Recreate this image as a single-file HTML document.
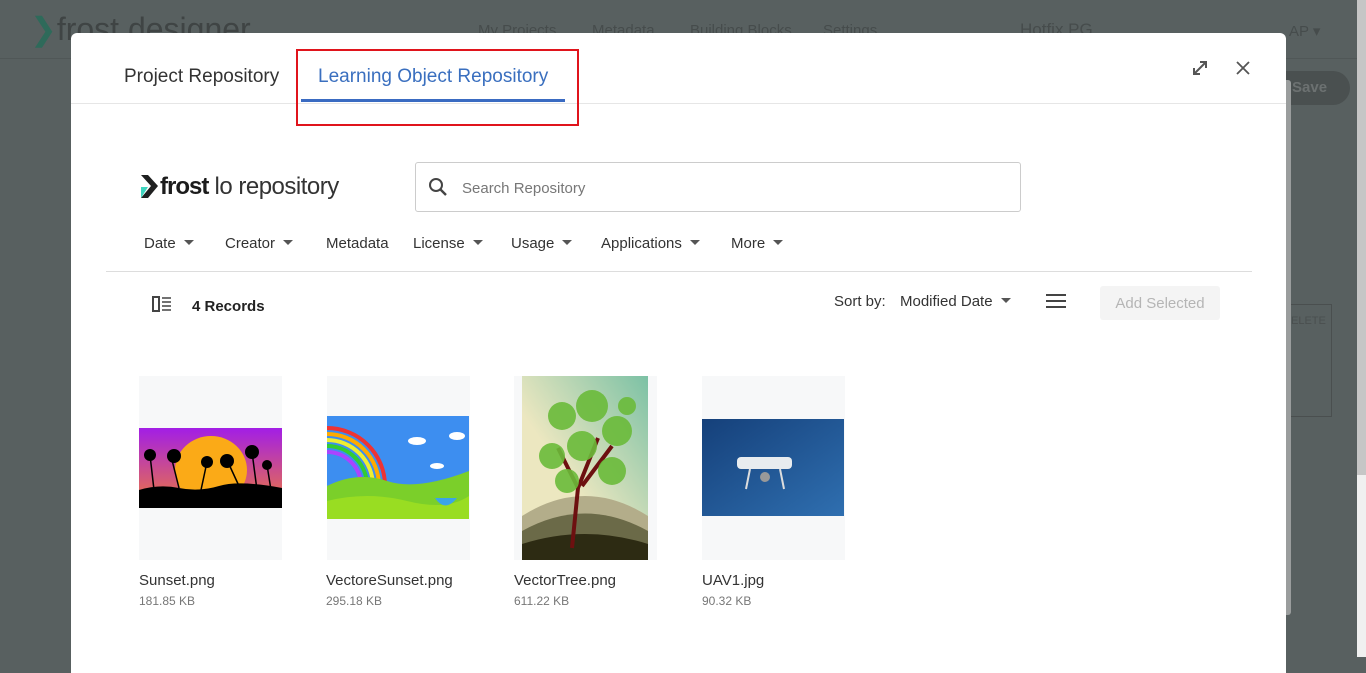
<!DOCTYPE html>
<html><head><meta charset="utf-8"><style>
*{box-sizing:border-box;margin:0;padding:0}
body{width:1366px;height:657px;overflow:hidden;background:#586060;font-family:"Liberation Sans",sans-serif;position:relative}
.a{position:absolute}
.bgt{color:#464c4c;font-size:15px}
.modal{left:71px;top:33px;width:1215px;height:640px;background:#fff;border-radius:6px 6px 0 0}
.tab{font-size:19px;color:#333}
.flt{font-size:15px;color:#333;top:235px}
.car{display:inline-block;width:0;height:0;border-left:5px solid transparent;border-right:5px solid transparent;border-top:5px solid #555;margin-left:8px;vertical-align:3px}
.card{background:#f7f8f9;width:143px;height:184px;top:376px}
.nm{font-size:15px;color:#333;top:572px}
.sz{font-size:12px;color:#777;top:594px}
</style></head><body>
<div class="a" style="left:0;top:58px;width:1357px;height:1px;background:#505757"></div>
<div class="a" style="left:30px;top:10px;font-size:32px;color:#3f4444"><span style="color:#2e6a5a">&#10095;</span>frost designer</div>
<div class="a bgt" style="left:478px;top:22px">My Projects</div>
<div class="a bgt" style="left:592px;top:22px">Metadata</div>
<div class="a bgt" style="left:690px;top:22px">Building Blocks</div>
<div class="a bgt" style="left:823px;top:22px">Settings</div>
<div class="a bgt" style="left:1020px;top:20px;font-size:17px">Hotfix PG</div>
<div class="a bgt" style="left:1289px;top:22px">AP ▾</div>
<div class="a" style="left:1270px;top:71px;width:80px;height:34px;border-radius:17px;background:#4a5050;color:#6c7171;font-size:15px;padding:8px 0 0 22px;font-weight:bold">Save</div>
<div class="a" style="left:1290px;top:304px;width:42px;height:113px;border:1px solid #4a4f4f;color:#4a4f4f;font-size:11px;padding-top:10px">ELETE</div>
<div class="a" style="left:1357px;top:0;width:9px;height:475px;background:#c6c6c6"></div>
<div class="a" style="left:1357px;top:475px;width:9px;height:182px;background:#f0f0f0"></div>
<div class="a" style="left:1286px;top:80px;width:5px;height:535px;background:#9a9d9d;border-radius:0 3px 3px 0"></div>

<div class="a modal"></div>
<div class="a tab" style="left:124px;top:66px">Project Repository</div>
<div class="a tab" style="left:318px;top:66px;color:#3a6fbf">Learning Object Repository</div>
<div class="a" style="left:301px;top:99px;width:264px;height:3px;background:#3a6bc2"></div>
<div class="a" style="left:71px;top:103px;width:1215px;height:1px;background:#e6e6e6"></div>
<div class="a" style="left:296px;top:49px;width:283px;height:77px;border:2px solid #e0141c"></div>
<svg class="a" style="left:1190px;top:58px" width="20" height="20" viewBox="0 0 20 20"><path d="M4 16L16 4M10 4h6v6M4 10v6h6" fill="none" stroke="#555" stroke-width="2"/></svg>
<svg class="a" style="left:1236px;top:61px" width="14" height="14" viewBox="0 0 14 14"><path d="M1 1L13 13M13 1L1 13" stroke="#555" stroke-width="1.8"/></svg>

<svg class="a" style="left:139px;top:174px" width="22" height="26" viewBox="0 0 22 26"><path d="M2 1l10 11-10 12h7l10-12L9 1z" fill="#1f2020"/><path d="M2 13l7 0-7 11z" fill="#3fd6c0"/></svg>
<div class="a" style="left:160px;top:173px;font-size:24px;color:#1c1c1c;letter-spacing:-1px"><b>frost</b><span style="color:#333;font-weight:normal;letter-spacing:-0.5px"> lo repository</span></div>
<div class="a" style="left:415px;top:162px;width:606px;height:50px;border:1px solid #ccc;border-radius:3px"></div>
<svg class="a" style="left:428px;top:177px" width="20" height="20" viewBox="0 0 20 20"><circle cx="8" cy="8" r="6" fill="none" stroke="#444" stroke-width="2"/><path d="M12.5 12.5L18 18" stroke="#444" stroke-width="2.4"/></svg>
<div class="a" style="left:462px;top:180px;font-size:15px;color:#777">Search Repository</div>

<div class="a flt" style="left:144px">Date<span class="car"></span></div>
<div class="a flt" style="left:225px">Creator<span class="car"></span></div>
<div class="a flt" style="left:326px">Metadata</div>
<div class="a flt" style="left:413px">License<span class="car"></span></div>
<div class="a flt" style="left:511px">Usage<span class="car"></span></div>
<div class="a flt" style="left:601px">Applications<span class="car"></span></div>
<div class="a flt" style="left:731px">More<span class="car"></span></div>
<div class="a" style="left:106px;top:271px;width:1146px;height:1px;background:#ddd"></div>

<svg class="a" style="left:152px;top:296px" width="20" height="16" viewBox="0 0 20 16"><rect x="1" y="1" width="6" height="14" fill="none" stroke="#444" stroke-width="2"/><path d="M10 2h9M10 6h9M10 10h9M10 14h9" stroke="#444" stroke-width="1.6"/></svg>
<div class="a" style="left:192px;top:298px;font-size:15px;color:#222;font-weight:bold">4 Records</div>
<div class="a" style="left:834px;top:293px;font-size:15px;color:#333">Sort by:</div>
<div class="a" style="left:900px;top:293px;font-size:15px;color:#333">Modified Date<span class="car"></span></div>
<svg class="a" style="left:1046px;top:293px" width="20" height="16" viewBox="0 0 20 16"><path d="M0 2h20M0 8h20M0 14h20" stroke="#444" stroke-width="2"/></svg>
<div class="a" style="left:1100px;top:286px;width:120px;height:34px;background:#f4f4f4;border-radius:3px;color:#b5b5b5;font-size:15px;text-align:center;padding-top:9px">Add Selected</div>

<div class="a card" style="left:139px"></div>
<svg class="a" style="left:139px;top:428px" width="143" height="80" viewBox="0 0 143 80"><defs><linearGradient id="g1" x1="0" y1="0" x2="0" y2="1"><stop offset="0" stop-color="#a21ee6"/><stop offset="1" stop-color="#f07a3a"/></linearGradient></defs><rect width="143" height="80" fill="url(#g1)"/><ellipse cx="72" cy="42" rx="36" ry="34" fill="#fbaa17"/><path d="M0 62q20-6 40-2t40-2 63 2v20H0z" fill="#000"/><g stroke="#000" stroke-width="1.5"><path d="M15 62l-4-35M40 60l-8-32M62 62l6-28M100 58l-12-26M118 62l-5-38M132 62l-4-25"/></g><g fill="#000"><circle cx="11" cy="27" r="6"/><circle cx="35" cy="28" r="7"/><circle cx="88" cy="33" r="7"/><circle cx="113" cy="24" r="7"/><circle cx="128" cy="37" r="5"/><circle cx="68" cy="34" r="6"/></g></svg>
<div class="a card" style="left:327px"></div>
<svg class="a" style="left:327px;top:416px" width="142" height="103" viewBox="0 0 142 103"><rect width="142" height="103" fill="#3d8ef0"/><path d="M0 12a58 58 0 0 1 58 58" fill="none" stroke="#e33" stroke-width="4"/><path d="M0 18a52 52 0 0 1 52 52" fill="none" stroke="#fa0" stroke-width="4"/><path d="M0 24a46 46 0 0 1 46 46" fill="none" stroke="#ee3" stroke-width="4"/><path d="M0 30a40 40 0 0 1 40 40" fill="none" stroke="#3c3" stroke-width="4"/><path d="M0 36a34 34 0 0 1 34 34" fill="none" stroke="#a4f" stroke-width="4"/><g fill="#fff"><ellipse cx="90" cy="25" rx="9" ry="4"/><ellipse cx="130" cy="20" rx="8" ry="4"/><ellipse cx="110" cy="50" rx="7" ry="3"/></g><path d="M0 70q30-15 60-5t82-10v48H0z" fill="#7bcf2a"/><path d="M0 85q40-10 80 0t62-5v23H0z" fill="#99dd22"/><path d="M108 82q10 15 22 0z" fill="#3ba4e8"/></svg>
<div class="a card" style="left:514px"></div>
<svg class="a" style="left:522px;top:376px" width="126" height="184" viewBox="0 0 126 184"><defs><linearGradient id="g2" x1="1" y1="0" x2="0" y2="1"><stop offset="0" stop-color="#7cc1a5"/><stop offset=".6" stop-color="#ece7c0"/></linearGradient></defs><rect width="126" height="184" fill="url(#g2)"/><path d="M0 140q63-40 126 0v44H0z" fill="#b3ad8a"/><path d="M0 155q63-35 126 0v29H0z" fill="#6b6a48"/><path d="M0 168q63-20 126 0v16H0z" fill="#2d2b13"/><path d="M50 172l6-60-20-40M56 112l20-50M60 110l30-40" fill="none" stroke="#6d1010" stroke-width="4"/><g fill="#6bbb3a" opacity=".9"><circle cx="40" cy="40" r="14"/><circle cx="70" cy="30" r="16"/><circle cx="95" cy="55" r="15"/><circle cx="30" cy="80" r="13"/><circle cx="60" cy="70" r="15"/><circle cx="90" cy="95" r="14"/><circle cx="45" cy="105" r="12"/><circle cx="105" cy="30" r="9"/></g></svg>
<div class="a card" style="left:702px"></div>
<svg class="a" style="left:702px;top:419px" width="142" height="97" viewBox="0 0 142 97"><defs><linearGradient id="g3" x1="0" y1="0" x2="1" y2="1"><stop offset="0" stop-color="#15407a"/><stop offset="1" stop-color="#2f6fb0"/></linearGradient></defs><rect width="142" height="97" fill="url(#g3)"/><rect x="35" y="38" width="55" height="12" rx="4" fill="#e8ecef"/><path d="M48 50l-4 20M78 50l4 20" stroke="#ddd" stroke-width="2"/><circle cx="63" cy="58" r="5" fill="#999"/></svg>

<div class="a nm" style="left:139px">Sunset.png</div><div class="a sz" style="left:139px">181.85 KB</div>
<div class="a nm" style="left:326px">VectoreSunset.png</div><div class="a sz" style="left:326px">295.18 KB</div>
<div class="a nm" style="left:514px">VectorTree.png</div><div class="a sz" style="left:514px">611.22 KB</div>
<div class="a nm" style="left:702px">UAV1.jpg</div><div class="a sz" style="left:702px">90.32 KB</div>
</body></html>
